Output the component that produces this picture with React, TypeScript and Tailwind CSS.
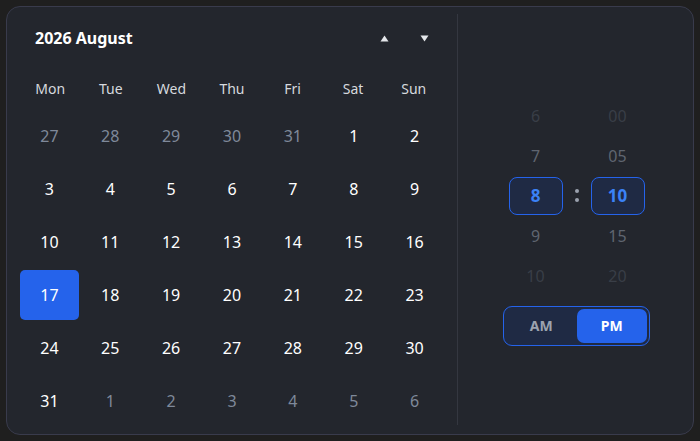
import React, { useState } from 'react'

type Day = { n: number; muted?: boolean }

const weekdays = ['Mon', 'Tue', 'Wed', 'Thu', 'Fri', 'Sat', 'Sun']

// August 2026 starts on a Saturday
const buildDays = (): Day[] => {
  const days: Day[] = []
  for (let d = 27; d <= 31; d++) days.push({ n: d, muted: true })
  for (let d = 1; d <= 31; d++) days.push({ n: d })
  for (let d = 1; days.length < 42; d++) days.push({ n: d, muted: true })
  return days
}

function Triangle({ dir }: { dir: 'up' | 'down' }) {
  return (
    <svg width="9" height="7" viewBox="0 0 9 7" className="text-gray-200">
      {dir === 'up' ? (
        <path d="M4.5 0.5 L8.5 6.5 L0.5 6.5 Z" fill="currentColor" />
      ) : (
        <path d="M0.5 0.5 L8.5 0.5 L4.5 6.5 Z" fill="currentColor" />
      )}
    </svg>
  )
}

function Wheel({ items, selected }: { items: string[]; selected: string }) {
  const idx = items.indexOf(selected)
  return (
    <div className="flex flex-col w-[54px]">
      {items.map((v, i) => {
        const dist = Math.abs(i - idx)
        if (dist === 0) {
          return (
            <div key={v} className="h-[40px] flex items-center justify-center">
              <div className="w-[54px] h-[38px] rounded-[8px] border border-[#2563eb] bg-[#1f2a44] flex items-center justify-center text-[17px] font-bold text-[#3b82f6]">
                {v}
              </div>
            </div>
          )
        }
        return (
          <div
            key={v}
            className={`h-[40px] flex items-center justify-center text-[16px] ${
              dist === 1 ? 'text-[#5f6570]' : 'text-[#393e47]'
            }`}
          >
            {v}
          </div>
        )
      })}
    </div>
  )
}

export default function App() {
  const [selected, setSelected] = useState(17)
  const [meridiem, setMeridiem] = useState<'AM' | 'PM'>('PM')
  const days = buildDays()

  return (
    <div
      className="w-[700px] h-[441px] bg-[#1f1f1f] p-[6px]"
      style={{ fontFamily: '"Noto Sans", "Open Sans", sans-serif' }}
    >
      <div className="w-[688px] h-[429px] rounded-[14px] border border-[#393b4c] bg-[#23262d] flex">
        {/* calendar */}
        <div className="w-[451px] px-[13px] pt-[6px] mt-[7px] mb-[9px] border-r border-[#343740]">
          <div className="h-[36px] flex items-center justify-between">
            <span className="pl-[15px] text-[16px] font-bold text-white">2026 August</span>
            <div className="flex">
              <button className="w-[40px] h-[36px] flex items-center justify-center">
                <Triangle dir="up" />
              </button>
              <button className="w-[40px] h-[36px] flex items-center justify-center">
                <Triangle dir="down" />
              </button>
            </div>
          </div>
          <div className="mt-[12px] h-[40px] grid grid-cols-7 items-center text-center text-[14px] text-[#d6d9de]">
            {weekdays.map((w) => (
              <span key={w}>{w}</span>
            ))}
          </div>
          <div className="mt-[3px] grid grid-cols-7 gap-x-[2px] gap-y-[3px]">
            {days.map((d, i) => {
              const isSel = !d.muted && d.n === selected
              return (
                <button
                  key={i}
                  onClick={() => !d.muted && setSelected(d.n)}
                  className={`h-[50px] rounded-[5px] flex items-center justify-center text-[16px] ${
                    isSel ? 'bg-[#2563eb] text-white' : d.muted ? 'text-[#7f899a]' : 'text-white'
                  }`}
                >
                  {d.n}
                </button>
              )
            })}
          </div>
        </div>

        {/* time */}
        <div className="flex-1 flex flex-col items-center justify-center pl-[2px]">
          <div className="flex items-center">
            <Wheel items={['6', '7', '8', '9', '10']} selected="8" />
            <div className="w-[28px] flex flex-col items-center gap-[5px]">
              <span className="w-[4px] h-[4px] rounded-full bg-[#9aa1ad]" />
              <span className="w-[4px] h-[4px] rounded-full bg-[#9aa1ad]" />
            </div>
            <Wheel items={['00', '05', '10', '15', '20']} selected="10" />
          </div>
          <div className="mt-[10px] w-[147px] h-[40px] rounded-[9px] border border-[#2563eb] bg-[#1f2a44] p-[2px] flex">
            {(['AM', 'PM'] as const).map((m) => (
              <button
                key={m}
                onClick={() => setMeridiem(m)}
                className={`flex-1 rounded-[7px] text-[14px] font-bold ${
                  meridiem === m ? 'bg-[#2563eb] text-white' : 'text-[#9ca3af]'
                }`}
              >
                {m}
              </button>
            ))}
          </div>
        </div>
      </div>
    </div>
  )
}
